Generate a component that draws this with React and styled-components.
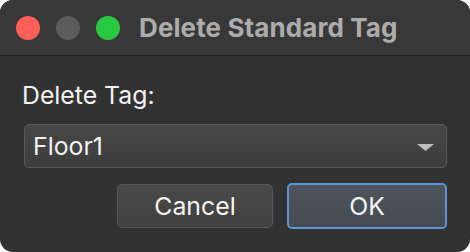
import React from 'react';
import styled, { createGlobalStyle } from 'styled-components';

const GlobalStyle = createGlobalStyle`
  html, body {
    margin: 0;
    padding: 0;
    background: #ffffff;
  }
  body {
    font-family: Inter, "Liberation Sans", sans-serif;
    -webkit-font-smoothing: antialiased;
  }
`;

const Window = styled.div`
  width: 470px;
  height: 252px;
  background: #323232;
  border-radius: 13px;
  overflow: hidden;
  display: flex;
  flex-direction: column;
`;

const TitleBar = styled.div`
  height: 55px;
  background: #383838;
  border-bottom: 1px solid #1c1c1c;
  display: flex;
  align-items: center;
  padding-left: 16px;
  gap: 16px;
`;

const Lights = styled.div`
  display: flex;
  gap: 16px;
`;

const Light = styled.span`
  width: 24px;
  height: 24px;
  border-radius: 50%;
  background: ${(p) => p.$color};
`;

const Title = styled.div`
  color: #acacac;
  font-size: 26px;
  font-weight: 700;
  letter-spacing: 0.1px;
  margin-left: 3px;
`;

const Body = styled.div`
  flex: 1;
  display: flex;
  flex-direction: column;
  padding: 24px 23px 0 22px;
`;

const Label = styled.div`
  color: #f2f2f2;
  font-size: 24.8px;
  line-height: 30px;
`;

const Select = styled.div`
  margin-top: 14px;
  margin-left: 2px;
  height: 42px;
  border: 1px solid #5a5a5a;
  border-radius: 5px;
  background: linear-gradient(#474747, #3d3d3d);
  display: flex;
  align-items: center;
  justify-content: space-between;
  padding: 0 12px 0 8px;
  color: #f2f2f2;
  font-size: 24.8px;
`;

const Arrow = styled.svg`
  width: 17px;
  height: 7px;
  margin-top: 2px;
`;

const Buttons = styled.div`
  display: flex;
  justify-content: flex-end;
  gap: 14px;
  margin-top: 16px;
`;

const Button = styled.button`
  width: ${(p) => (p.$primary ? '160px' : '156px')};
  height: ${(p) => (p.$primary ? '46px' : '44px')};
  margin-top: ${(p) => (p.$primary ? '-1px' : '0')};
  border-radius: 5px;
  border: ${(p) => (p.$primary ? '2px solid #5e93d6' : '1px solid #575757')};
  background: ${(p) =>
    p.$primary ? 'linear-gradient(#4e545c, #454b52)' : 'linear-gradient(#494949, #404040)'};
  color: #f4f4f4;
  font-family: inherit;
  font-size: 24.8px;
  padding: 0;
  cursor: pointer;
`;

export default function App() {
  return (
    <>
      <GlobalStyle />
      <Window>
        <TitleBar>
          <Lights>
            <Light $color="#fe5f57" />
            <Light $color="#5b5b5b" />
            <Light $color="#28c840" />
          </Lights>
          <Title>Delete Standard Tag</Title>
        </TitleBar>
        <Body>
          <Label>Delete Tag:</Label>
          <Select>
            <span>Floor1</span>
            <Arrow viewBox="0 0 17 7">
              <path d="M0 0 L17 0 L8.5 7 Z" fill="#bdbdbd" />
            </Arrow>
          </Select>
          <Buttons>
            <Button>Cancel</Button>
            <Button $primary>OK</Button>
          </Buttons>
        </Body>
      </Window>
    </>
  );
}
